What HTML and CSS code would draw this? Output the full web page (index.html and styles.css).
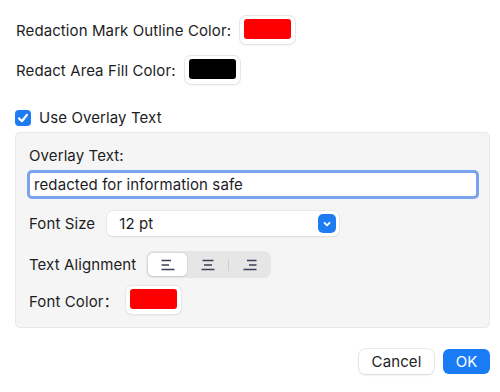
FILE: index.html
```html
<!DOCTYPE html>
<html>
<head>
<meta charset="utf-8">
<link rel="stylesheet" href="styles.css">
</head>
<body>
<div class="dialog">
  <div class="row r1">
    <span class="label">Redaction Mark Outline Color:</span>
    <span class="swatch"><span class="fill red"></span></span>
  </div>
  <div class="row r2">
    <span class="label">Redact Area Fill Color:</span>
    <span class="swatch"><span class="fill black"></span></span>
  </div>
  <div class="row check-row">
    <span class="checkbox">
      <svg width="14" height="14" viewBox="0 0 14 14"><path d="M3 7.4 L5.9 10.2 L11 3.8" fill="none" stroke="#fff" stroke-width="2.2" stroke-linecap="round" stroke-linejoin="round"/></svg>
    </span>
    <span class="label">Use Overlay Text</span>
  </div>
  <div class="panel">
    <div class="plabel">Overlay Text:</div>
    <div class="input">redacted for information safe</div>
    <div class="prow fs">
      <span class="label">Font Size</span>
      <div class="select">
        <span>12 pt</span>
        <span class="chev"><svg width="10" height="10" viewBox="0 0 10 10"><path d="M2.5 3.8 L5 6.3 L7.5 3.8" fill="none" stroke="#fff" stroke-width="1.8" stroke-linecap="round" stroke-linejoin="round"/></svg></span>
      </div>
    </div>
    <div class="prow ta">
      <span class="label">Text Alignment</span>
      <div class="seg">
        <span class="segbtn active"><svg width="16" height="12" viewBox="0 0 16 12"><path d="M1.5 1.5H11M1.5 6H9M1.5 10.5H14.5" stroke="#3a4256" stroke-width="1.3"/></svg></span>
        <span class="segbtn"><svg width="16" height="12" viewBox="0 0 16 12"><path d="M2.5 1.5H13.5M4 6H12M1.5 10.5H14.5" stroke="#3a4256" stroke-width="1.3"/></svg></span>
        <span class="sep"></span>
        <span class="segbtn"><svg width="16" height="12" viewBox="0 0 16 12"><path d="M5 1.5H14.5M7 6H14.5M1.5 10.5H14.5" stroke="#3a4256" stroke-width="1.3"/></svg></span>
      </div>
    </div>
    <div class="prow fc">
      <span class="label">Font Color：</span>
      <span class="swatch"><span class="fill red"></span></span>
    </div>
  </div>
  <div class="buttons">
    <button class="btn cancel">Cancel</button>
    <button class="btn ok">OK</button>
  </div>
</div>
</body>
</html>
```

FILE: styles.css
```css
html, body {
  margin: 0;
  padding: 0;
  background: #ffffff;
}
body {
  width: 500px;
  height: 392px;
  overflow: hidden;
  font-family: "Inter", "Liberation Sans", "Noto Sans CJK SC", sans-serif;
  font-size: 15px;
  letter-spacing: 0.1px;
  color: #1d1d1f;
}
.dialog {
  padding: 16px 10px 0 15px;
  display: flex;
  flex-direction: column;
}
.row {
  display: flex;
  align-items: center;
}
.label {
  white-space: nowrap;
}
.r1 .label { margin-left: 1px; }
.r2 { margin-top: 12px; }
.r2 .label { margin-left: 1px; }
.swatch {
  display: inline-flex;
  box-sizing: border-box;
  width: 55px;
  height: 28px;
  padding: 3px 4px 5px 4px;
  background: #fff;
  border-radius: 6px;
  box-shadow: 0 0 0 1px #e6e6e6, 0 1px 2px rgba(0,0,0,0.12);
  margin-left: 9px;
}
.fill {
  flex: 1;
  border-radius: 3px;
}
.fill.red { background: #fe0000; }
.fill.black { background: #000; }
.check-row {
  margin-top: 24px;
}
.checkbox {
  width: 16px;
  height: 16px;
  border-radius: 4px;
  background: #1e7bf2;
  display: inline-flex;
  align-items: center;
  justify-content: center;
  margin-right: 8px;
}
.checkbox svg { display: block; }
.panel {
  margin-top: 5px;
  width: 475px;
  box-sizing: border-box;
  background: #f5f5f5;
  border: 1px solid #e8e8e8;
  border-radius: 5px;
  padding: 14px 10px 13px 13px;
  display: flex;
  flex-direction: column;
}
.plabel { line-height: 18px; }
.input {
  margin-top: 5px;
  margin-left: -2px;
  width: 452px;
  box-sizing: border-box;
  height: 29px;
  border: 3px solid #7aa3ef;
  border-radius: 5px;
  background: #fff;
  padding-left: 4px;
  line-height: 23px;
}
.prow {
  display: flex;
  align-items: center;
}
.fs { margin-top: 12px; }
.select {
  margin-left: 12px;
  width: 232px;
  height: 25px;
  box-sizing: border-box;
  background: #fff;
  border-radius: 6px;
  box-shadow: 0 0 0 0.5px #e0e0e0, 0 1px 2px rgba(0,0,0,0.1);
  display: flex;
  align-items: center;
  justify-content: space-between;
  padding: 0 3px 0 12px;
}
.chev {
  width: 18px;
  height: 19px;
  border-radius: 5px;
  background: #1e7bf2;
  display: inline-flex;
  align-items: center;
  justify-content: center;
}
.chev svg { display: block; }
.ta { margin-top: 15px; }
.seg {
  margin-left: 10px;
  display: flex;
  align-items: center;
  background: #e6e6e6;
  border-radius: 7px;
  padding: 2px;
  height: 27px;
  box-sizing: border-box;
}
.segbtn {
  width: 39px;
  height: 23px;
  display: inline-flex;
  align-items: center;
  justify-content: center;
  border-radius: 5px;
}
.segbtn.active {
  background: #fff;
  box-shadow: 0 0 0 0.5px #d0d0d0, 0 1px 1px rgba(0,0,0,0.12);
}
.sep {
  width: 1px;
  height: 12px;
  background: #cfcfcf;
  margin: 0 1px;
}
.segbtn + .segbtn { margin-left: 1px; }
.fc { margin-top: 8px; }
.fc .swatch { margin-left: 7px; }
.buttons {
  margin-top: 21px;
  display: flex;
  justify-content: flex-end;
  gap: 9px;
}
.btn {
  font-family: inherit;
  font-size: 15px;
  letter-spacing: 0.1px;
  height: 25px;
  border: none;
  border-radius: 6px;
  padding: 0;
}
.cancel {
  width: 75px;
  background: #fff;
  color: #1d1d1f;
  box-shadow: 0 0 0 0.5px #d8d8d8, 0 1px 2px rgba(0,0,0,0.15);
}
.ok {
  width: 47px;
  background: #1a7cf5;
  color: #fff;
}
```
